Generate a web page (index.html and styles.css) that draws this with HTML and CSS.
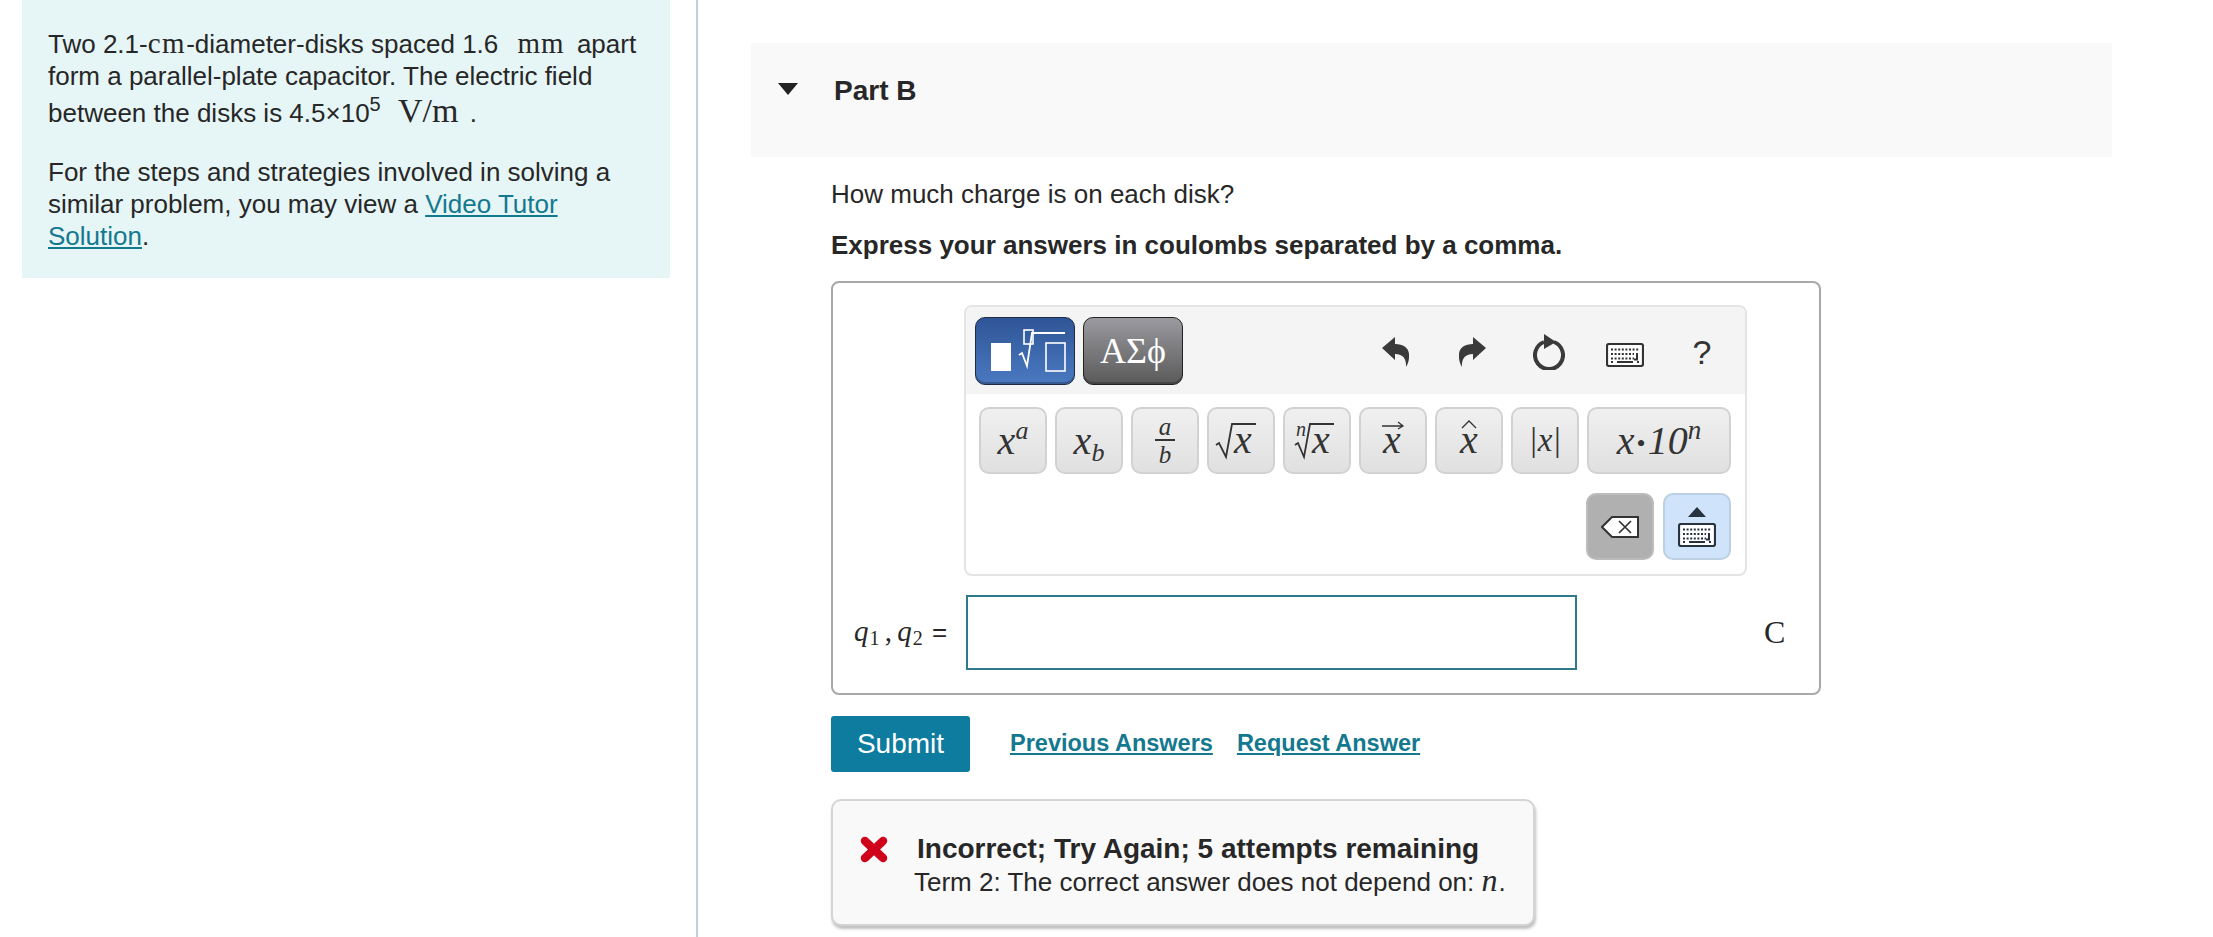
FILE: index.html
```html
<!DOCTYPE html>
<html lang="en">
<head>
<meta charset="utf-8">
<title>Part B</title>
<link rel="stylesheet" href="styles.css">
</head>
<body>
<svg class="defs" width="0" height="0" aria-hidden="true">
  <symbol id="kbd" viewBox="0 0 38 24">
    <rect x="1" y="1" width="36" height="22" rx="2" fill="#fff" stroke="currentColor" stroke-width="2.2"/>
    <path d="M5 6.5h28M5 11h23M5 15.5h23" stroke="currentColor" stroke-width="2" stroke-dasharray="2 1.6" fill="none"/>
    <path d="M11 19h16M5 19h2M31 19h2" stroke="currentColor" stroke-width="2" fill="none"/>
    <path d="M31 10v6.5h-3" stroke="currentColor" stroke-width="2" fill="none"/>
  </symbol>
</svg>
<div class="page">
  <aside class="left">
    <div class="intro">
      <p class="intro-p">Two 2.1-<span class="m">cm</span>-diameter-disks spaced 1.6 <span class="m unit">mm</span> apart form a parallel-plate capacitor. The electric field between the disks is 4.5×10<sup class="exp">5</sup> <span class="m unit big">V/m</span> .</p>
      <p class="intro-p">For the steps and strategies involved in solving a similar problem, you may view a <a href="#" class="tlink">Video Tutor Solution</a>.</p>
    </div>
  </aside>
  <main class="right">
    <header class="part-head">
      <span class="caret"></span>
      <h2 class="part-title">Part B</h2>
    </header>
    <section class="part-body">
      <p class="q">How much charge is on each disk?</p>
      <p class="q bold">Express your answers in coulombs separated by a comma.</p>
      <div class="answer">
        <div class="toolbar">
          <div class="tb-top">
            <button class="tab tab-blue" aria-label="Templates">
              <svg width="96" height="64" viewBox="0 0 96 64"><rect x="14" y="24" width="20" height="28" fill="#fff"/><rect x="47" y="11" width="9" height="14" fill="none" stroke="#fff" stroke-width="1.6"/><path d="M42 36l3-2 5 13 5-33h33" fill="none" stroke="#fff" stroke-width="1.8"/><rect x="69" y="24" width="19" height="28" fill="none" stroke="#fff" stroke-width="1.6"/></svg>
            </button>
            <button class="tab tab-grey">ΑΣϕ</button>
            <div class="tb-actions">
              <svg class="act" width="27" height="30" viewBox="0 0 27 30"><path d="M0 11L13 0v7c10 0 15 5 14 14-.3 3-1 6-3 9 .5-7-2-13-11-13v6z" fill="#3a3a3a"/></svg>
              <svg class="act" width="27" height="30" viewBox="0 0 27 30"><path d="M27 11L14 0v7C4 7-1 12 0 21c.3 3 1 6 3 9-.5-7 2-13 11-13v6z" fill="#3a3a3a"/></svg>
              <svg class="act" width="32" height="36" viewBox="0 0 32 36"><path d="M11 8A14 14 0 1 0 21 8" fill="none" stroke="#3a3a3a" stroke-width="4"/><path d="M11 0l12 8-12 7z" fill="#3a3a3a"/></svg>
              <svg class="act kbd-ic" width="38" height="24"><use href="#kbd"/></svg>
              <span class="help">?</span>
            </div>
          </div>
          <div class="tb-body">
            <div class="key-row">
              <button class="key"><span class="mi">x<sup class="s-up">a</sup></span></button>
              <button class="key"><span class="mi">x<sub class="s-dn">b</sub></span></button>
              <button class="key"><span class="frac"><span class="mi fr">a</span><span class="mi fr fr-b">b</span></span></button>
              <button class="key"><svg class="ksvg" width="68" height="67" viewBox="0 0 68 67"><path d="M9 38l3-2 7 14 6-33h24" fill="none" stroke="#333" stroke-width="1.8"/><text x="27" y="46" class="svg-mi">x</text></svg></button>
              <button class="key"><svg class="ksvg" width="68" height="67" viewBox="0 0 68 67"><path d="M12 38l3-2 6 14 6-33h24" fill="none" stroke="#333" stroke-width="1.8"/><text x="13" y="29" class="svg-sm">n</text><text x="29" y="46" class="svg-mi">x</text></svg></button>
              <button class="key"><svg class="ksvg" width="68" height="67" viewBox="0 0 68 67"><path d="M23 19h21m-5-4l5 4-5 3" fill="none" stroke="#333" stroke-width="1.3"/><text x="24" y="46" class="svg-mi">x</text></svg></button>
              <button class="key"><svg class="ksvg" width="68" height="67" viewBox="0 0 68 67"><path d="M27 21l7-7 7 7" fill="none" stroke="#333" stroke-width="1.3"/><text x="25" y="46" class="svg-mi">x</text></svg></button>
              <button class="key"><span class="mi abs">|x|</span></button>
              <button class="key key-wide"><span class="mi">x<span class="dot">•</span>10<sup class="s-up">n</sup></span></button>
            </div>
            <div class="key-row key-row-end">
              <button class="key key-dark" aria-label="Delete"><svg width="38" height="24" viewBox="0 0 38 24"><path d="M11 2h26v20H11L1 12z" fill="#fff" stroke="#333" stroke-width="2"/><path d="M18 6l12 12m0-12L18 18" stroke="#333" stroke-width="1.7"/></svg></button>
              <button class="key key-light" aria-label="Keyboard"><span class="up"></span><svg class="kbd-blue" width="38" height="24"><use href="#kbd"/></svg></button>
            </div>
          </div>
        </div>
        <div class="answer-row">
          <div class="lbl"><i>q</i><span class="lsub">1</span> , <i>q</i><span class="lsub">2</span> <span class="eq">=</span></div>
          <div class="input"></div>
          <div class="unit-c">C</div>
        </div>
      </div>
      <div class="actions">
        <button class="submit">Submit</button>
        <a href="#" class="act-link act-first">Previous Answers</a>
        <a href="#" class="act-link">Request Answer</a>
      </div>
      <div class="feedback">
        <div class="fb-top">
          <svg class="fb-x" width="28" height="27" viewBox="0 0 28 27"><path d="M5 5l18 17M23 5L5 22" stroke="#d0021b" stroke-width="8.5" stroke-linecap="round" fill="none"/></svg>
          <strong class="fb-title">Incorrect; Try Again; 5 attempts remaining</strong>
        </div>
        <p class="fb-msg">Term 2: The correct answer does not depend on: <i class="m fb-n">n</i>.</p>
      </div>
    </section>
  </main>
</div>
</body>
</html>
```
FILE: styles.css
```css
* { box-sizing: border-box; }
html, body { margin: 0; height: 100%; background: #fff; overflow: hidden; }
body { font-family: "Liberation Sans", Arial, sans-serif; color: #272727; font-size: 26px; }
.defs { position: absolute; }
.page { display: flex; height: 937px; }

.left { width: 698px; flex: none; border-right: 2px solid #c3d0da; padding-left: 22px; }
.intro { width: 648px; height: 278px; background: #e6f5f6; padding: 27px 20px 0 26px; }
.intro-p { margin: 0 0 26px; line-height: 32px; }
.m { font-family: "Liberation Serif", serif; font-size: 29px; letter-spacing: 1.5px; }
.unit { margin: 0 5px 0 12px; font-size: 29px; letter-spacing: 1px; }
.unit.big { font-size: 34px; margin: 0 4px 0 10px; line-height: 38px; letter-spacing: 0; }
.exp { font-size: 20px; line-height: 0; vertical-align: 11px; }
.tlink { color: #14798f; }

.right { flex: 1; padding: 43px 0 0 53px; }
.part-head { width: 1361px; height: 114px; background: #f9f9f9; display: flex; align-items: flex-start; padding: 28px 0 0 27px; }
.caret { width: 0; height: 0; border: 10px solid transparent; border-top: 12px solid #222; border-bottom: 0; margin-top: 12px; }
.part-title { margin: 0 0 0 36px; font-size: 28px; line-height: 40px; font-weight: 700; }
.part-body { padding: 21px 0 0 80px; }
.q { margin: 0 0 19px; line-height: 32px; }
.bold { font-weight: 700; margin: 0 0 20px; }

.answer { width: 990px; height: 414px; border: 2px solid #a8a8a8; border-radius: 8px; padding: 22px 0 0 131px; }
.toolbar { width: 783px; height: 271px; border: 2px solid #e4e4e4; border-radius: 8px; display: flex; flex-direction: column; }
.tb-top { height: 87px; background: #f4f4f4; display: flex; align-items: flex-start; padding: 10px 0 0 9px; gap: 8px; flex: none; border-radius: 6px 6px 0 0; }
.tab { height: 68px; width: 100px; padding: 0; border-radius: 10px; border: 1px solid #1f2b45; display: flex; align-items: center; justify-content: center; box-shadow: inset 0 -2px 0 rgba(0,0,0,.25); }
.tab-blue { background: linear-gradient(#2f5597, #4a79c0); }
.tab-grey { background: linear-gradient(#9a9aa0, #5a5a5a); color: #fff; font: 36px "Liberation Serif", serif; border-color: #222; }
.tb-actions { margin-left: auto; display: flex; align-items: center; height: 70px; }
.act { display: block; flex: none; }
.act:nth-child(1) { margin-right: 50px; }
.act:nth-child(2) { margin-right: 47px; }
.act:nth-child(3) { margin-right: 41px; }
.kbd-ic { color: #333; margin-right: 47px; margin-top: 5px; }
.help { width: 22px; margin-right: 32px; font-size: 34px; line-height: 1; color: #333; text-align: center; }

.tb-body { flex: 1; padding: 13px 14px 0 13px; display: flex; flex-direction: column; gap: 19px; }
.key-row { display: flex; gap: 8px; }
.key-row-end { justify-content: flex-end; gap: 9px; }
.key { width: 68px; height: 67px; flex: none; padding: 0; border-radius: 10px; border: 2px solid #d2d2d2; background: linear-gradient(#f0f0f0, #e0e0e0); display: flex; align-items: center; justify-content: center; color: #333; position: relative; }
.key-wide { width: 144px; }
.ksvg { display: block; margin: -2px; flex: none; }
.svg-mi { font: italic 40px "Liberation Serif", serif; fill: #333; }
.svg-sm { font: italic 20px "Liberation Serif", serif; fill: #333; }
.mi { font: italic 40px/1 "Liberation Serif", serif; color: #333; white-space: nowrap; }
.s-up { font-size: 26px; line-height: 0; vertical-align: 15px; }
.s-dn { font-size: 26px; line-height: 0; vertical-align: -7px; }
.frac { display: flex; flex-direction: column; align-items: center; }
.fr { font-size: 25px; width: 20px; text-align: center; line-height: 25px; }
.fr-b { border-top: 2px solid #333; line-height: 27px; }
.abs { font-size: 33px; }
.dot { font-size: 26px; font-style: normal; margin: 0 2px; vertical-align: 2px; }
.key-wide .mi { font-size: 40px; }
.key-wide .s-up { font-size: 27px; }
.key-dark { background: #b0b0b0; border-color: #bcbcbc; }
.key-light { background: #cfe4fa; border-color: #bcd0e2; flex-direction: column; gap: 6px; }
.up { width: 0; height: 0; border: 9px solid transparent; border-bottom: 10px solid #26323f; border-top: 0; }
.kbd-blue { color: #26323f; display: block; }

.answer-row { display: flex; align-items: center; height: 75px; margin: 19px 0 0 -131px; }
.lbl { width: 131px; margin-left: 21px; margin-right: -19px; font: 29px "Liberation Serif", serif; word-spacing: -2px; white-space: nowrap; flex: none; }
.lsub { font-size: 20px; vertical-align: -4px; margin-left: 1px; }
.eq { font: 26px "Liberation Sans", Arial, sans-serif; margin-left: 4px; }
.input { width: 611px; height: 75px; border: 2px solid #2e7a8c; flex: none; }
.unit-c { font: 32px "Liberation Serif", serif; margin-left: 187px; }

.actions { display: flex; align-items: center; margin-top: 21px; height: 56px; }
.submit { width: 139px; height: 56px; border: 0; border-radius: 3px; background: #0e7c9e; color: #fff; font: 28px "Liberation Sans", Arial, sans-serif; padding: 0; }
.act-link { color: #14798f; font-weight: 700; font-size: 23.5px; margin-top: -2px; }
.act-first { margin-left: 40px; margin-right: 24px; }

.feedback { width: 704px; height: 127px; margin-top: 27px; background: #f9f9f9; border: 2px solid #d4d4d4; border-radius: 10px; box-shadow: 1px 3px 3px rgba(0,0,0,.25); padding: 33px 0 0 27px; }
.fb-top { display: flex; align-items: center; height: 30px; }
.fb-x { flex: none; margin-right: 29px; }
.fb-title { font-size: 28px; white-space: nowrap; }
.fb-msg { margin: 2px 0 0 54px; line-height: 32px; white-space: nowrap; }
.fb-n { font-size: 32px; line-height: 0; letter-spacing: 0; margin-right: 1px; }
```
